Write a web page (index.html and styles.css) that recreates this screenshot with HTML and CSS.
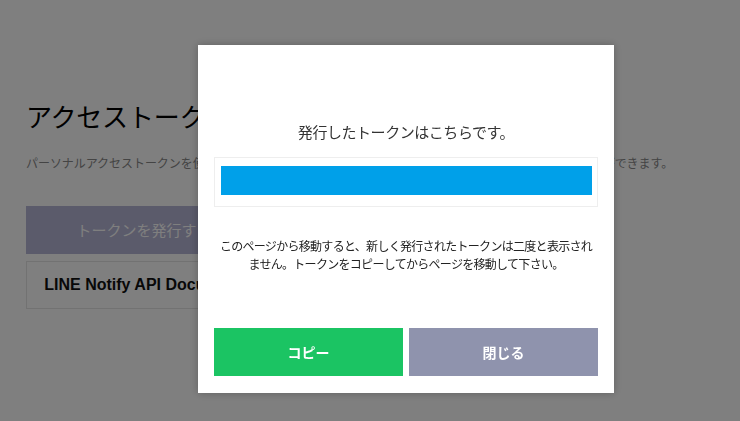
FILE: index.html
```html
<!doctype html>
<html lang="ja">
<head>
<meta charset="utf-8">
<title>LINE Notify - マイページ</title>
<link rel="stylesheet" href="styles.css">
</head>
<body>
<div class="page">
    <h1 class="title">アクセストークン</h1>
    <p class="desc">パーソナルアクセストークンを使用すると、Webhookの設定をせずに自分やグループ宛てに通知を送ることができます。</p>
    <a href="javascript:;" class="btn btn-issue">トークンを発行する</a>
    <a href="javascript:;" class="btn btn-doc">LINE Notify API Document</a>
</div>

<div class="mask">
    <div class="dialog">
        <p class="dialog-title">発行したトークンはこちらです。</p>
        <div class="token-box">
            <div class="token"></div>
        </div>
        <p class="notice">このページから移動すると、新しく発行されたトークンは二度と表示され<br>ません。トークンをコピーしてからページを移動して下さい。</p>
        <div class="dialog-btns">
            <a href="javascript:;" class="dbtn dbtn-copy">コピー</a>
            <a href="javascript:;" class="dbtn dbtn-close">閉じる</a>
        </div>
    </div>
</div>
</body>
</html>
```

FILE: styles.css
```css
*{margin:0;padding:0;box-sizing:border-box;}
html,body{height:100%;}
body{background:#fff;font-family:"Noto Sans CJK JP","Liberation Sans",sans-serif;color:#000;}
a{text-decoration:none;}

.page{padding:99px 0 0 26px;}
.title{font-size:26px;font-weight:normal;line-height:34px;color:#000;letter-spacing:-0.2px;}
.desc{font-size:12px;line-height:18px;color:#888;margin-top:21px;letter-spacing:-0.05px;}
.btn{display:block;width:236px;height:48px;line-height:48px;text-align:center;}
.btn-issue{margin-top:34px;background:#b6b6d6;color:#fff;font-size:15px;}
.btn-doc{margin-top:7px;border:1px solid #e4e4e4;color:#111;font:bold 16px "Liberation Sans",Arial,sans-serif;line-height:46px;}

.mask{position:fixed;top:0;left:0;right:0;bottom:0;background:rgba(0,0,0,.5);padding:45px 0 0 198px;}
.dialog{width:416px;background:#fff;padding:77px 16px 17px;box-shadow:0 0 8px rgba(0,0,0,.25);}
.dialog-title{font-size:15px;line-height:20px;text-align:center;color:#333;letter-spacing:-0.45px;}
.token-box{margin-top:15px;height:50px;border:1px solid #eee;padding:8px 5px 11px 6px;}
.token{height:29px;background:#00a0e9;}
.notice{margin-top:30px;font-size:12px;line-height:18px;text-align:center;color:#222;letter-spacing:-0.7px;}
.dialog-btns{display:flex;gap:6px;margin-top:55px;}
.dbtn{flex:1;height:48px;line-height:48px;text-align:center;color:#fff;font-size:14px;font-weight:bold;}
.dbtn-copy{background:#1bc463;}
.dbtn-close{background:#8f93ad;}
```
